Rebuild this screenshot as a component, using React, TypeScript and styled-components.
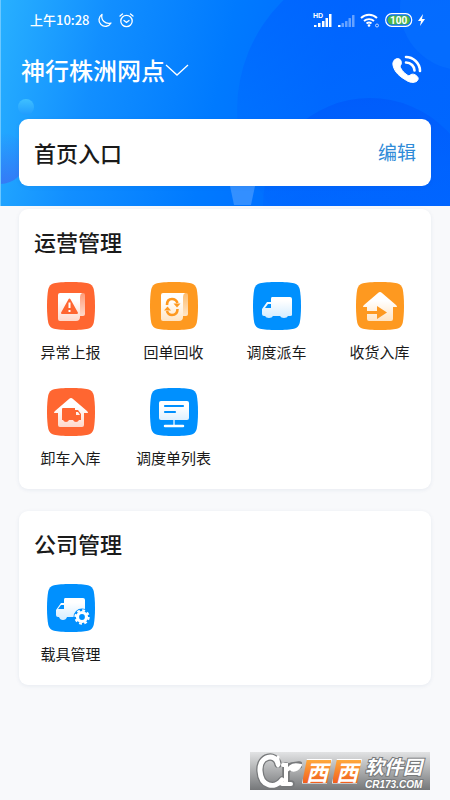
import React from "react";
import styled, { createGlobalStyle } from "styled-components";

const CJK = '"Noto Sans CJK SC", "Noto Sans", sans-serif';

const GlobalStyle = createGlobalStyle`
  *, *::before, *::after { box-sizing: border-box; }
  body {
    margin: 0;
    background: #f8f9fb;
    color: #1a1a1a;
    font-family: ${CJK};
  }
  button { border: 0; padding: 0; background: none; color: inherit; font: inherit; cursor: pointer; }
`;

const Page = styled.div`
  position: relative;
  min-height: 100vh;
`;

const Header = styled.header`
  position: relative;
  isolation: isolate;
  padding: 0 19px 20px;
  overflow: hidden;
  color: #fff;
  background: linear-gradient(102deg, #28b0ff 0%, #128fff 22%, #007aff 48%, #006cff 70%, #0068ff 100%);
`;

const Backdrop = styled.svg`
  position: absolute;
  inset: 0;
  z-index: -1;
  width: 100%;
  height: 100%;
`;

const StatusBar = styled.div`
  display: flex;
  align-items: center;
  justify-content: space-between;
  height: 40px;
  padding: 0 6px 0 11px;
`;

const StatusGroup = styled.div<{ $gap: number }>`
  display: flex;
  align-items: center;
  gap: ${(p) => p.$gap}px;
`;

const Clock = styled.span`
  font-size: 13px;
  line-height: 20px;
  font-weight: 500;
`;

const TitleBar = styled.div`
  display: flex;
  align-items: center;
  justify-content: space-between;
  height: 60px;
  margin-bottom: 19px;
  padding: 0 8px 0 2px;
`;

const SiteButton = styled.button`
  display: flex;
  align-items: center;
  font-size: 24px;
  line-height: 32px;
  font-weight: 500;
`;

const IconButton = styled.button`
  display: flex;
`;

const Card = styled.section`
  border-radius: 9px;
  background: #fff;
  color: #1a1a1a;
  box-shadow: 0 1px 4px rgba(30, 60, 110, 0.08);
`;

const EntryCard = styled(Card)`
  display: flex;
  align-items: center;
  justify-content: space-between;
  height: 67px;
  padding: 0 15px 2px;
`;

const CardTitle = styled.h2`
  margin: 0;
  font-size: 22px;
  line-height: 24px;
  font-weight: 500;
`;

const EditButton = styled.button`
  color: #2f8bd8;
  font-size: 19px;
  line-height: 28px;
`;

const Main = styled.main`
  display: flex;
  flex-direction: column;
  gap: 22px;
  padding: 3px 19px 24px;
`;

const GroupCard = styled(Card)`
  padding: 20px 0;

  ${CardTitle} { padding: 0 15px; margin-bottom: 29px; }
`;

const Grid = styled.div`
  display: grid;
  grid-template-columns: repeat(4, 1fr);
  row-gap: 25px;
`;

const Entry = styled.button`
  display: flex;
  flex-direction: column;
  align-items: center;
  gap: 11px;
  font-size: 15px;
  line-height: 22px;
  white-space: nowrap;
`;

const Watermark = styled.div`
  position: absolute;
  right: 20px;
  bottom: 10px;
  display: flex;
  align-items: center;
  width: 180px;
  height: 38px;
  padding-left: 6px;
  background: linear-gradient(#e2e3e4, #757779);
  color: #fff;
`;

const Monogram = styled.svg`
  flex: none;
  width: 46px;
  height: 38px;
`;

const Tiles = styled.span`
  display: flex;
  flex: none;
  margin-right: 3px;
`;

const Tile = styled.span`
  width: 30px;
  height: 25px;
  border: 1px solid #fff;
  background: linear-gradient(#ffa93c, #f2601e);
  font-size: 22px;
  line-height: 22px;
  font-weight: 700;
  font-style: italic;
  text-align: center;
  clip-path: polygon(5px 0, 100% 0, 25px 100%, 0 100%);
`;

const BrandText = styled.span`
  display: flex;
  flex: none;
  flex-direction: column;
  -webkit-text-stroke: 2px #77797b;
  paint-order: stroke fill;
`;

const BrandName = styled.span`
  font-size: 19px;
  line-height: 27px;
  font-style: italic;
  font-weight: 700;
`;

const BrandSite = styled.span`
  font: italic 700 10px/11px "Liberation Sans", sans-serif;
`;

type Tone = "red" | "amber" | "blue";
const tones: Record<Tone, string> = { red: "#ff6631", amber: "#fe9920", blue: "#0090fe" };
const tints: Record<Tone, string> = { red: "#ffd8ca", amber: "#ffe4c3", blue: "#cce9ff" };

type Kind = "report" | "receipt" | "truck" | "inbound" | "unload" | "board" | "vehicle";

const HOUSE = "M24 10q1 0 2 1l14 12q2 2 0 2h-3v12q0 2-2 2H13q-2 0-2-2V25H8q-2 0 0-2l14-12q1-1 2-1z";

function Glyph({ kind, color, fill }: { kind: Kind; color: string; fill: string }) {
  switch (kind) {
    case "report":
    case "receipt":
      return (
        <>
          <path d="M33 11h3q2 0 2 2v19q0 2-2 2h-4z" fill={`url(#fold-${kind})`} />
          <path d="M13 11h22q-2 1-2 4v20q0 4-4 4H13q-2 0-2-2V13q0-2 2-2z" fill={fill} />
          {kind === "report" ? (
            <>
              <path d="M22.500 17.500 30 31H15z" fill={color} stroke={color} strokeWidth="2" strokeLinejoin="round" />
              <path d="M22.500 20.500v5.500M22.500 28v2" stroke="#fff" strokeWidth="2" />
            </>
          ) : (
            <>
              <path d="M17 23q0-6 5-6 4 0 5.500 4M27.500 27q0 6-5.500 6-4 0-5-4" fill="none" stroke={color} strokeWidth="2.600" />
              <path d="M23.500 21.500h7L27 25.500zM14 28.500h7l-3.500-4z" fill={color} />
            </>
          )}
        </>
      );
    case "truck":
      return (
        <>
          <path d="M19 15h18q2 0 2 2v16q0 1-2 1h-2q-1 2-4 2t-4-2h-7q-1 2-4 2t-4-2h-1q-2 0-2-2v-5l5-7h4v-3q0-2 1-2z" fill={fill} />
          <path d="m12 26 3-4h3v4z" fill={color} />
        </>
      );
    case "inbound":
      return (
        <>
          <path d={HOUSE} fill={fill} />
          <path d="M11 29h10v-5l10 6.500L21 37v-5H11z" fill={color} />
        </>
      );
    case "unload":
      return (
        <>
          <path d={HOUSE} fill={fill} />
          <path d="M16 20h12v2h3l3 4v6h-2q-1 2-3 2t-3-2h-4q-1 2-3 2t-3-2h-1V21q0-1 1-1z" fill={color} />
          <path d="M29 24h2l2 3h-4z" fill={fill} />
        </>
      );
    case "board":
      return (
        <>
          <rect x="9" y="13" width="30" height="19" rx="2" fill={fill} />
          <path d="M15 18h18M15 24h10" stroke={color} strokeWidth="2.200" strokeLinecap="round" />
          <path d="M24 32v5" stroke="#9bd3ff" strokeWidth="2" />
          <path d="M15 38h18" stroke="#fff" strokeWidth="2.500" strokeLinecap="round" />
        </>
      );
    case "vehicle":
      return (
        <>
          <path d="M18 14h18q2 0 2 2v16q0 1-2 1h-9-7q-1 3-4 3t-4-3h-1q-2 0-2-2v-5l5-7h3v-3q0-2 1-2z" fill={fill} />
          <path d="m11 25 3-4h3v4z" fill={color} />
          <circle cx="35" cy="33" r="8.500" fill={color} />
          <circle cx="35" cy="33" r="4.500" fill="none" stroke="#fff" strokeWidth="3.200" />
          <circle cx="35" cy="33" r="6.600" fill="none" stroke="#fff" strokeWidth="2.200" strokeDasharray="2.800 2.384" />
        </>
      );
  }
}

function EntryIcon({ kind, tone }: { kind: Kind; tone: Tone }) {
  const id = `shade-${kind}`;
  return (
    <svg width="48" height="48" viewBox="0 0 48 48" aria-hidden="true">
      <defs>
        <linearGradient id={id} x1="0" y1="10" x2="0" y2="39" gradientUnits="userSpaceOnUse">
          <stop offset="0.300" stopColor="#fff" />
          <stop offset="1" stopColor={tints[tone]} />
        </linearGradient>
        <linearGradient id={`fold-${kind}`} x1="0" y1="11" x2="0" y2="34" gradientUnits="userSpaceOnUse">
          <stop offset="0" stopColor="#fff" stopOpacity="0.350" />
          <stop offset="1" stopColor="#fff" stopOpacity="0.750" />
        </linearGradient>
      </defs>
      <path d="M24 0C32 0 37 .4 41 1.200Q45.500 2.500 46.700 7C47.600 12 48 17 48 24S47.600 36 46.700 41Q45.500 45.500 41 46.800C37 47.600 32 48 24 48S11 47.600 7 46.800Q2.500 45.500 1.300 41C.4 36 0 31 0 24S.4 12 1.300 7Q2.500 2.500 7 1.200C11 .4 16 0 24 0z" fill={tones[tone]} />
      <Glyph kind={kind} color={tones[tone]} fill={`url(#${id})`} />
    </svg>
  );
}

interface Item {
  label: string;
  kind: Kind;
  tone: Tone;
}

const groups: { title: string; items: Item[] }[] = [
  {
    title: "运营管理",
    items: [
      { label: "异常上报", kind: "report", tone: "red" },
      { label: "回单回收", kind: "receipt", tone: "amber" },
      { label: "调度派车", kind: "truck", tone: "blue" },
      { label: "收货入库", kind: "inbound", tone: "amber" },
      { label: "卸车入库", kind: "unload", tone: "red" },
      { label: "调度单列表", kind: "board", tone: "blue" },
    ],
  },
  { title: "公司管理", items: [{ label: "载具管理", kind: "vehicle", tone: "blue" }] },
];

function HeaderBackdrop() {
  return (
    <Backdrop viewBox="0 0 450 206" preserveAspectRatio="xMidYMid slice" aria-hidden="true">
      <defs>
        <linearGradient id="bubble" x1="0" y1="0" x2="0" y2="1">
          <stop offset="0" stopColor="#3fc0ff" />
          <stop offset="1" stopColor="#209cff" />
        </linearGradient>
        <linearGradient id="glow" x1="0" y1="0" x2="0" y2="1">
          <stop offset="0" stopColor="#3a70f4" stopOpacity="0" />
          <stop offset="1" stopColor="#3a70f4" stopOpacity="0.800" />
        </linearGradient>
        <linearGradient id="disc" x1="0" y1="0" x2="0" y2="1">
          <stop offset="0" stopColor="#005eff" stopOpacity="0.700" />
          <stop offset="0.650" stopColor="#005eff" stopOpacity="0.100" />
        </linearGradient>
        <linearGradient id="hill" x1="0" y1="0" x2="0" y2="1">
          <stop offset="0" stopColor="#0058fa" stopOpacity="0.700" />
          <stop offset="0.500" stopColor="#0060ff" stopOpacity="0.300" />
        </linearGradient>
      </defs>
      <circle cx="390" cy="110" r="153" fill="url(#disc)" />
      <circle cx="462" cy="8" r="62" fill="#0a78ff" opacity="0.400" />
      <circle cx="370" cy="205" r="107" fill="url(#hill)" />
      <circle cx="0" cy="158" r="26" fill="url(#glow)" />
      <circle cx="26" cy="107" r="8" fill="url(#bubble)" />
      <path d="M230 186h25l-4 19h-17z" fill="#fff" opacity="0.200" />
      <path d="M0 0h1v206H0z" fill="#6cc8ff" />
    </Backdrop>
  );
}

function SignalBars({ level }: { level: number }) {
  return (
    <svg width="18" height="15" viewBox="0 0 18 15" fill="#fff" aria-hidden="true">
      {[2, 4, 6, 9, 12].map((h, i) => (
        <rect key={h} x={1 + i * 3.5} y={14 - h} width="2.500" height={h} rx="0.500" opacity={i < level ? 1 : 0.4} />
      ))}
    </svg>
  );
}

export default function App() {
  return (
    <>
      <GlobalStyle />
      <Page>
        <Header>
          <HeaderBackdrop />
          <StatusBar>
            <StatusGroup $gap={7}>
              <Clock>上午10:28</Clock>
              <svg width="15" height="15" viewBox="0 0 15 15" fill="none" stroke="#fff" strokeWidth="1.300" strokeLinejoin="round" aria-hidden="true">
                <path d="M5 1.500a6.400 6.400 0 1 0 9 8.500A7 7 0 0 1 5 1.500z" />
              </svg>
              <svg width="15" height="15" viewBox="0 0 15 15" fill="none" stroke="#fff" strokeWidth="1.300" strokeLinecap="round" aria-hidden="true">
                <circle cx="7.500" cy="8" r="5.700" />
                <path d="m1 3 2.500-2M14 3l-2.500-2M5 7.500l2.500 2 2.500-2" />
              </svg>
            </StatusGroup>
            <StatusGroup $gap={5}>
              <svg width="19" height="16" viewBox="0 0 19 16" fill="#fff" aria-hidden="true">
                <text x="0" y="6" fontFamily="Liberation Sans, sans-serif" fontWeight="700" fontSize="7">HD</text>
                <path d="M1 13h2.500v2H1zM5 11h2.500v4H5zM9 9h2.500v6H9zM12.500 6H15v9h-2.500zM16 2h2.500v13H16z" />
              </svg>
              <SignalBars level={1} />
              <svg width="20" height="16" viewBox="0 0 20 16" fill="none" stroke="#fff" strokeWidth="1.900" aria-hidden="true">
                <path d="M1 6a11.500 11.500 0 0 1 16 0M4 9a7.500 7.500 0 0 1 10 0M6.500 11.500a4 4 0 0 1 5 0" />
                <circle cx="9" cy="13.500" r="1.300" fill="#fff" stroke="none" />
                <circle cx="17" cy="13.500" r="1.500" strokeWidth="1" opacity="0.700" />
              </svg>
              <svg width="28" height="14" viewBox="0 0 28 14" aria-hidden="true">
                <rect x="0.700" y="0.700" width="26" height="12.600" rx="6" fill="none" stroke="#fff" strokeWidth="1.200" />
                <rect x="2.500" y="2.500" width="22.500" height="9" rx="4.500" fill="#4bb549" />
                <text x="13.700" y="10.800" textAnchor="middle" fill="#fff" fontFamily="Roboto, sans-serif" fontWeight="700" fontSize="10">100</text>
              </svg>
              <svg width="7" height="12" viewBox="0 0 7 12" fill="#fff" aria-hidden="true">
                <path d="M5 0 0 7h3L2 12l5-7H4z" />
              </svg>
            </StatusGroup>
          </StatusBar>
          <TitleBar>
            <SiteButton>
              神行株洲网点
              <svg width="24" height="14" viewBox="0 0 24 14" fill="none" stroke="#fff" strokeWidth="1.300" aria-hidden="true">
                <path d="m1 2 11 10L23 2" />
              </svg>
            </SiteButton>
            <IconButton aria-label="拨打电话">
              <svg width="31" height="30" viewBox="0 0 31 30" fill="none" stroke="#fff" strokeLinecap="round" aria-hidden="true">
                <path d="M2.500 5c2-2 5.500-2 6.500 1 1 2 0 4-1 5 1 4 5 8 9 10 2-2 4-2.500 6.500-1 3 2 3.500 4 1.500 6-3 2.500-8 1.500-12-1.500C7 21 3 17 1.500 12 .5 9 .5 7 2.500 5z" fill="#fff" />
                <path d="M14 2c7 0 14 6 14 14M14 7.500c5 0 8.500 4 8.500 8" strokeWidth="2.600" />
              </svg>
            </IconButton>
          </TitleBar>
          <EntryCard>
            <CardTitle>首页入口</CardTitle>
            <EditButton>编辑</EditButton>
          </EntryCard>
        </Header>
        <Main>
          {groups.map((group) => (
            <GroupCard key={group.title}>
              <CardTitle>{group.title}</CardTitle>
              <Grid>
                {group.items.map((item) => (
                  <Entry key={item.label}>
                    <EntryIcon kind={item.kind} tone={item.tone} />
                    {item.label}
                  </Entry>
                ))}
              </Grid>
            </GroupCard>
          ))}
        </Main>
        <Watermark>
          <Monogram viewBox="0 0 46 38" role="img" aria-label="Cr" fill="none" strokeLinecap="round">
            <g stroke="#77797b" strokeWidth="7.500">
              <path d="M22 12C20 1 3 3 4 19s15 18 22 9" />
              <path d="M30 14v17M27 32h8M31 18c3-5 6-4 12-5" />
            </g>
            <g stroke="#fff">
              <path d="M22 12C20 1 3 3 4 19s15 18 22 9" strokeWidth="5" />
              <path d="M22 5v9" strokeWidth="3" />
              <path d="M27 13h3v18M26 32h9" strokeWidth="4" />
              <path d="M31 19c2-6 7-8 14-6-3 6-8 7-11 4z" strokeWidth="2" fill="#fff" />
            </g>
          </Monogram>
          <Tiles>
            <Tile>西</Tile>
            <Tile>西</Tile>
          </Tiles>
          <BrandText>
            <BrandName>软件园</BrandName>
            <BrandSite>CR173.COM</BrandSite>
          </BrandText>
        </Watermark>
      </Page>
    </>
  );
}
